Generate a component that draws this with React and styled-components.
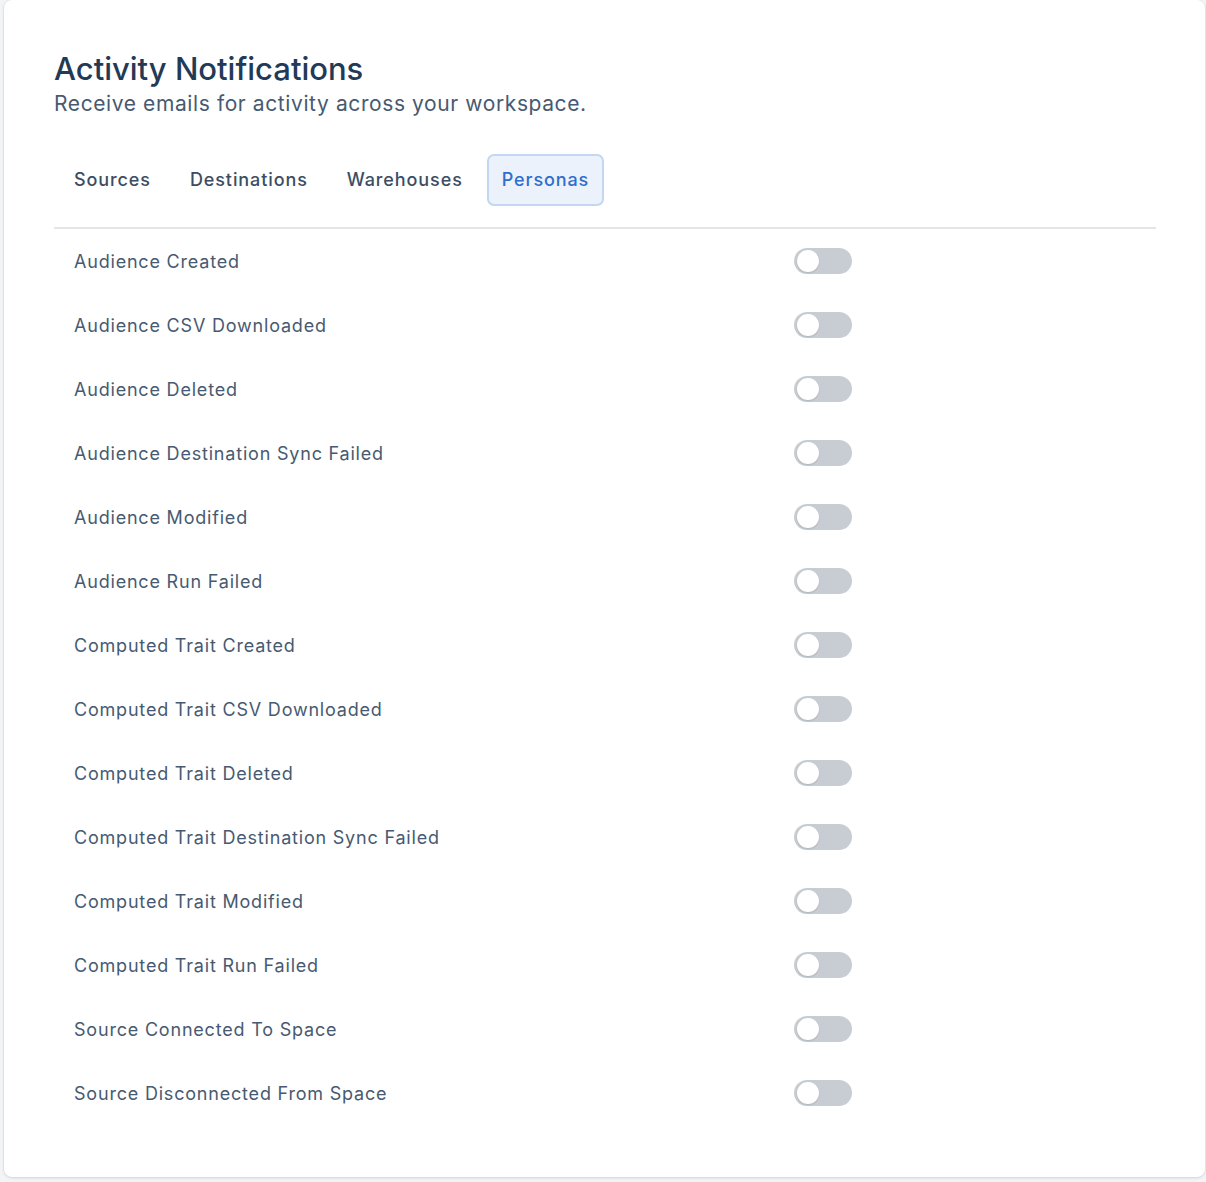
import React, { useState } from "react";
import styled, { createGlobalStyle } from "styled-components";

const Global = createGlobalStyle`
  html, body { margin: 0; padding: 0; background: #f3f4f6; }
  body { font-family: "Inter", "Noto Sans", sans-serif; -webkit-font-smoothing: antialiased; }
  * { box-sizing: border-box; }
`;

const Page = styled.div`
  padding: 0 1px 5px 4px;
`;

const Card = styled.div`
  background: #ffffff;
  border-radius: 8px;
  box-shadow: 0 1px 3px rgba(30, 45, 70, 0.12), 0 0 0 1px rgba(30, 45, 70, 0.04);
  padding: 51px 49px 50px 50px;
  min-height: 1177px;
`;

const Title = styled.h1`
  margin: 0;
  font-size: 31px;
  line-height: 36px;
  font-weight: 500;
  color: #233a56;
`;

const Subtitle = styled.p`
  margin: 3px 0 0;
  font-size: 21px;
  line-height: 28px;
  color: #475a71;
  letter-spacing: 0.6px;
`;

const Tabs = styled.div`
  display: flex;
  gap: 9px;
  margin-top: 36px;
  padding: 0 0 21px 5px;
  border-bottom: 2px solid #e3e5e9;
`;

const Tab = styled.button`
  font-family: inherit;
  font-size: 18px;
  font-weight: 500;
  height: 52px;
  padding: 0 13px 2px;
  border-radius: 7px;
  cursor: pointer;
  border: 2px solid ${(p) => (p.$active ? "#c3d7f1" : "transparent")};
  background: ${(p) => (p.$active ? "#ebf2fb" : "transparent")};
  color: ${(p) => (p.$active ? "#2f6ecb" : "#3c4d63")};
  letter-spacing: 0.9px;
`;

const List = styled.div`
  display: flex;
  flex-direction: column;
`;

const Row = styled.div`
  display: grid;
  grid-template-columns: 720px 58px;
  align-items: center;
  height: 64px;
  padding-left: 20px;
`;

const Label = styled.span`
  font-size: 18px;
  color: #475a71;
  letter-spacing: 0.8px;
`;

const Track = styled.button`
  width: 58px;
  height: 26px;
  border: none;
  padding: 0;
  border-radius: 13px;
  background: ${(p) => (p.$on ? "#2f6ecb" : "#c8cdd4")};
  position: relative;
  cursor: pointer;
`;

const Knob = styled.span`
  position: absolute;
  top: 2px;
  left: ${(p) => (p.$on ? "34px" : "3px")};
  width: 22px;
  height: 22px;
  border-radius: 50%;
  background: #ffffff;
  box-shadow: 0 1px 2px rgba(0, 0, 0, 0.12);
`;

const tabs = ["Sources", "Destinations", "Warehouses", "Personas"];
const items = [
  "Audience Created",
  "Audience CSV Downloaded",
  "Audience Deleted",
  "Audience Destination Sync Failed",
  "Audience Modified",
  "Audience Run Failed",
  "Computed Trait Created",
  "Computed Trait CSV Downloaded",
  "Computed Trait Deleted",
  "Computed Trait Destination Sync Failed",
  "Computed Trait Modified",
  "Computed Trait Run Failed",
  "Source Connected To Space",
  "Source Disconnected From Space",
];

export default function App() {
  const [active, setActive] = useState("Personas");
  const [on, setOn] = useState({});
  return (
    <Page>
      <Global />
      <Card>
        <Title>Activity Notifications</Title>
        <Subtitle>Receive emails for activity across your workspace.</Subtitle>
        <Tabs>
          {tabs.map((t) => (
            <Tab key={t} $active={t === active} onClick={() => setActive(t)}>
              {t}
            </Tab>
          ))}
        </Tabs>
        <List>
          {items.map((it) => (
            <Row key={it}>
              <Label>{it}</Label>
              <Track $on={!!on[it]} onClick={() => setOn({ ...on, [it]: !on[it] })}>
                <Knob $on={!!on[it]} />
              </Track>
            </Row>
          ))}
        </List>
      </Card>
    </Page>
  );
}
